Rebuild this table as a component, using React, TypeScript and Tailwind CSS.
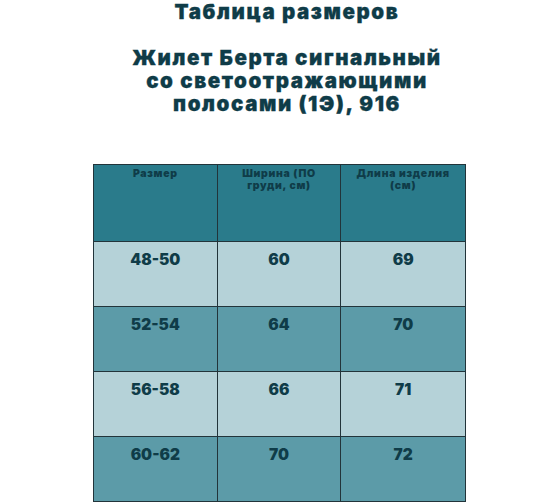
import React from 'react';

const rows = [
  { size: '48-50', width: '60', length: '69', light: true },
  { size: '52-54', width: '64', length: '70', light: false },
  { size: '56-58', width: '66', length: '71', light: true },
  { size: '60-62', width: '70', length: '72', light: false },
];

const font = { fontFamily: 'Inter, "Liberation Sans", sans-serif' };

export default function App() {
  return (
    <div className="w-[560px] h-[504px] bg-white overflow-hidden" style={font}>
      {/* Title */}
      <div className="pl-[14px] text-center text-[20.5px] leading-[23px] tracking-[1.6px] font-black text-[#0f3c48] [-webkit-text-stroke:0.3px_#0f3c48]">
        <div>Таблица размеров</div>
        <div>&nbsp;</div>
        <div>Жилет Берта сигнальный</div>
        <div>со светоотражающими</div>
        <div>полосами (1Э), 916</div>
      </div>

      {/* Size table */}
      <div className="mt-[49px] ml-[93px] w-[373px] border border-[#22343a]">
        <div className="grid grid-cols-3 h-[76px] bg-[#2a7b8b]">
          <div className="pt-[3px] text-center text-[10.5px] leading-[12px] tracking-[0.7px] font-black text-[#0f3c48] border-r border-[#22343a]">
            Размер
          </div>
          <div className="pt-[3px] px-4 text-center text-[10.5px] leading-[12px] tracking-[0.7px] font-black text-[#0f3c48] border-r border-[#22343a]">
            Ширина (ПО груди, см)
          </div>
          <div className="pt-[3px] px-2 text-center text-[10.5px] leading-[12px] tracking-[0.7px] font-black text-[#0f3c48]">
            Длина изделия (см)
          </div>
        </div>
        {rows.map((r) => (
          <div
            key={r.size}
            className={`grid grid-cols-3 h-[65px] border-t border-[#22343a] ${
              r.light ? 'bg-[#b5d2d8]' : 'bg-[#5c9ba8]'
            }`}
          >
            <div className="pt-[8px] text-center text-[15.5px] leading-[20px] font-black text-[#0f3c48] border-r border-[#22343a]">
              {r.size}
            </div>
            <div className="pt-[8px] text-center text-[15.5px] leading-[20px] font-black text-[#0f3c48] border-r border-[#22343a]">
              {r.width}
            </div>
            <div className="pt-[8px] text-center text-[15.5px] leading-[20px] font-black text-[#0f3c48]">
              {r.length}
            </div>
          </div>
        ))}
      </div>
    </div>
  );
}
